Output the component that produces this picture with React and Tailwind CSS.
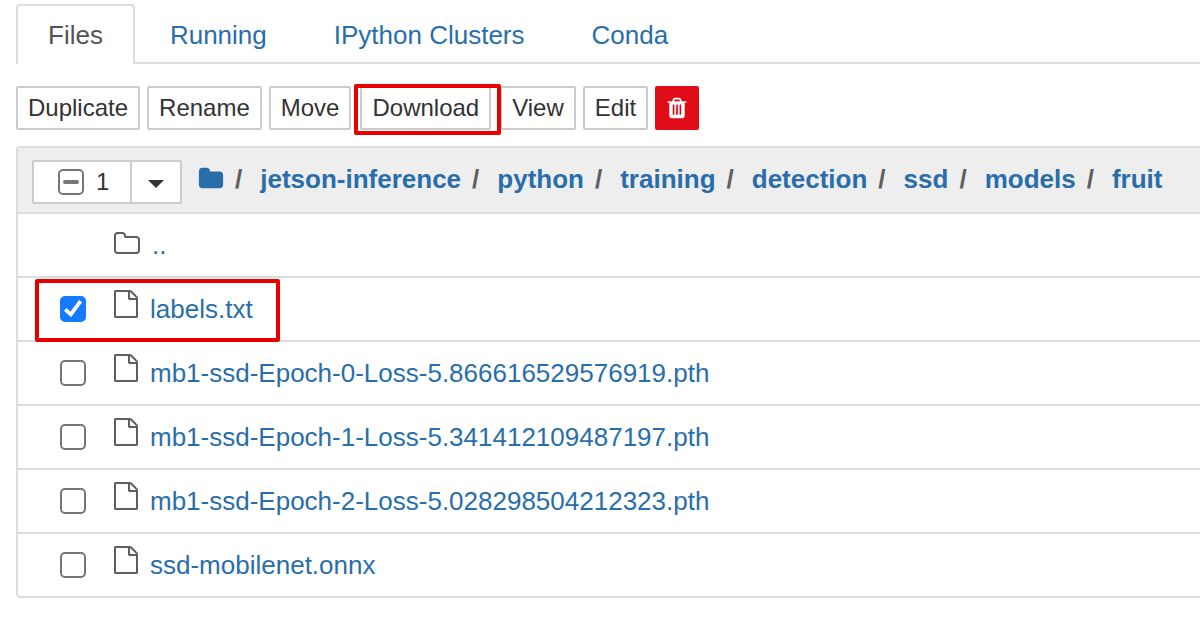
import { useEffect, useRef, useState } from "react";

const PATHS = {
  trash:
    "M704 1376v-704q0-14-9-23t-23-9h-64q-14 0-23 9t-9 23v704q0 14 9 23t23 9h64q14 0 23-9t9-23zm256 0v-704q0-14-9-23t-23-9h-64q-14 0-23 9t-9 23v704q0 14 9 23t23 9h64q14 0 23-9t9-23zm256 0v-704q0-14-9-23t-23-9h-64q-14 0-23 9t-9 23v704q0 14 9 23t23 9h64q14 0 23-9t9-23zm-544-992h448l-48-117q-7-9-17-11h-317q-10 2-17 11zm928 32v64q0 14-9 23t-23 9h-96v948q0 83-47 143.5t-113 60.5h-832q-66 0-113-58.5t-47-141.5v-952h-96q-14 0-23-9t-9-23v-64q0-14 9-23t23-9h309l70-167q15-37 54-63t79-26h320q40 0 79 26t54 63l70 167h309q14 0 23 9t9 23z",
  folder:
    "M1728 608v704q0 92-66 158t-158 66h-1216q-92 0-158-66t-66-158v-960q0-92 66-158t158-66h320q92 0 158 66t66 158v32h672q92 0 158 66t66 158z",
  folderOpen:
    "M1600 1312v-704q0-40-28-68t-68-28h-704q-40 0-68-28t-28-68v-64q0-40-28-68t-68-28h-320q-40 0-68 28t-28 68v960q0 40 28 68t68 28h1216q40 0 68-28t28-68zm128-704v704q0 92-66 158t-158 66h-1216q-92 0-158-66t-66-158v-960q0-92 66-158t158-66h320q92 0 158 66t66 158v32h672q92 0 158 66t66 158z",
  file:
    "M1596 380q28 28 48 76t20 88v1152q0 40-28 68t-68 28h-1344q-40 0-68-28t-28-68v-1600q0-40 28-68t68-28h896q40 0 88 20t76 48zm-444-244v376h376q-10-29-22-41l-313-313q-12-12-41-22zm384 1528v-1024h-416q-40 0-68-28t-28-68v-416h-768v1536h1280z",
};

function Icon({ name, className }) {
  return (
    <svg viewBox="0 0 1792 1792" fill="currentColor" aria-hidden="true" className={className}>
      <path d={PATHS[name]} />
    </svg>
  );
}

const TABS = ["Files", "Running", "IPython Clusters", "Conda"];
const CRUMBS = ["jetson-inference", "python", "training", "detection", "ssd", "models", "fruit"];
const FILES = [
  "labels.txt",
  "mb1-ssd-Epoch-0-Loss-5.866616529576919.pth",
  "mb1-ssd-Epoch-1-Loss-5.341412109487197.pth",
  "mb1-ssd-Epoch-2-Loss-5.028298504212323.pth",
  "ssd-mobilenet.onnx",
];

function ToolButton({ children }) {
  return (
    <button className="h-11 rounded-xs border-2 border-[#ccc] bg-white px-[10px] text-[24px] leading-9 text-[#333]">
      {children}
    </button>
  );
}

function Highlight({ className }) {
  return <span className={`pointer-events-none absolute z-10 rounded-xs border-4 border-[#e60000] ${className}`} />;
}

function Checkbox({ id, label, checked, mixed, onChange }) {
  const ref = useRef(null);
  useEffect(() => {
    ref.current.indeterminate = Boolean(mixed);
  }, [mixed]);
  return (
    <span className="grid size-[26px] shrink-0 place-items-center">
      <input
        ref={ref}
        id={id}
        type="checkbox"
        aria-label={label}
        checked={checked}
        onChange={onChange}
        className="col-start-1 row-start-1 size-[26px] appearance-none rounded-[5px] border-2 border-[#767676] bg-white checked:border-[#147aff] checked:bg-[#147aff]"
      />
      {mixed && (
        <svg viewBox="0 0 26 26" className="pointer-events-none col-start-1 row-start-1 size-[26px]" aria-hidden="true">
          <path d="M7 13h12" stroke="#767676" strokeWidth="4" strokeLinecap="round" />
        </svg>
      )}
      {checked && (
        <svg viewBox="0 0 26 26" className="pointer-events-none col-start-1 row-start-1 size-[26px]" aria-hidden="true">
          <path d="M5.2 13.4l5.6 5L20.6 5.2" fill="none" stroke="#fff" strokeWidth="3.8" />
        </svg>
      )}
    </span>
  );
}

export default function App() {
  const [selected, setSelected] = useState(["labels.txt"]);
  const toggle = (name) =>
    setSelected((now) => (now.includes(name) ? now.filter((n) => n !== name) : [...now, name]));
  const all = selected.length === FILES.length;

  return (
    <main className="min-h-screen overflow-hidden bg-white pt-1 pl-4 font-['Liberation_Sans',Arial,sans-serif] text-[26px] text-[#5e5e5e]">
      <nav className="flex gap-[3px] border-b-2 border-[#ddd]">
        {TABS.map((tab, i) => (
          <a
            key={tab}
            href="#"
            className={
              i === 0
                ? "-mb-0.5 h-15 rounded-t-[4px] border-2 border-b-0 border-[#ddd] bg-white px-[30px] leading-[58px] text-[#555]"
                : "-mb-0.5 h-15 border-2 border-transparent px-[30px] leading-[58px] whitespace-nowrap text-[#296eaa]"
            }
          >
            {tab}
          </a>
        ))}
      </nav>

      <div className="mt-[22px] flex gap-[7px]">
        <ToolButton>Duplicate</ToolButton>
        <ToolButton>Rename</ToolButton>
        <ToolButton>Move</ToolButton>
        <span className="relative px-0.5">
          <ToolButton>Download</ToolButton>
          <Highlight className="-top-0.5 -right-2 -bottom-[5px] -left-1" />
        </span>
        <ToolButton>View</ToolButton>
        <ToolButton>Edit</ToolButton>
        <button
          aria-label="Delete"
          className="flex h-11 w-11 items-center justify-center rounded-xs bg-[#df0b17] text-white"
        >
          <Icon name="trash" className="size-6" />
        </button>
      </div>

      <section className="mt-4 rounded-l-[4px] border-y-2 border-l-2 border-[#ddd]">
        <header className="flex h-16 items-center bg-[#eee] pl-[14px]">
          <div className="mt-1 flex h-11 shrink-0 rounded-xs border-2 border-[#ccc] bg-white text-[24px] text-[#333]">
            <label className="flex w-24 items-center gap-3 pl-6">
              <Checkbox
                id="select-all"
                label="Select all files"
                checked={all}
                mixed={selected.length > 0 && !all}
                onChange={() => setSelected(all ? [] : FILES)}
              />
              {selected.length}
            </label>
            <button aria-label="Select by type" className="flex w-[50px] items-center justify-center border-l-2 border-[#ccc]">
              <svg viewBox="0 0 16 8" className="mt-1 h-2 w-4" aria-hidden="true">
                <path d="M0 0h16L8 8z" fill="#333" />
              </svg>
            </button>
          </div>
          <nav className="mb-0.5 ml-4 flex items-center font-bold">
            <a href="#" aria-label="Home" className="text-[#296eaa]">
              <Icon name="folder" className="size-[26px]" />
            </a>
            {CRUMBS.map((crumb) => (
              <span key={crumb} className="flex">
                <span className="pr-[18px] pl-[11px]">/</span>
                <a href="#" className="text-[#296eaa]">
                  {crumb}
                </a>
              </span>
            ))}
          </nav>
        </header>

        <ul>
          <li className="flex h-16 items-center border-t-2 border-[#ddd] pl-[95px]">
            <Icon name="folderOpen" className="mb-0.5 size-7" />
            <a href="#" className="ml-[11px] text-[#296eaa]">
              ..
            </a>
          </li>
          {FILES.map((file, i) => (
            <li key={file} className="relative flex h-16 items-center border-t-2 border-[#ddd] pl-[42px]">
              <Checkbox
                id={`file-${i}`}
                label={file}
                checked={selected.includes(file)}
                onChange={() => toggle(file)}
              />
              <Icon name="file" className="mb-[10px] ml-[26px] size-7" />
              <a href="#" className="ml-[10px] text-[#296eaa]">
                {file}
              </a>
              {i === 0 && <Highlight className="top-px -bottom-0.5 left-[17px] w-[245px]" />}
            </li>
          ))}
        </ul>
      </section>
    </main>
  );
}
